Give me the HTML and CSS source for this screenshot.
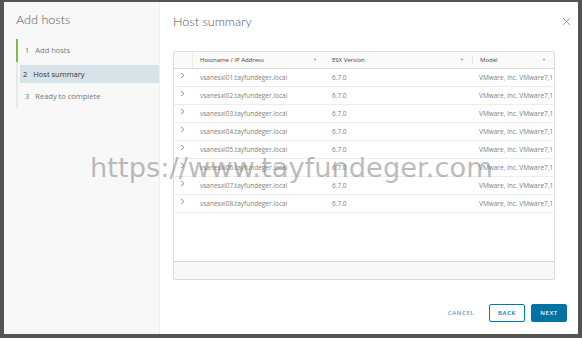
FILE: index.html
```html
<!DOCTYPE html>
<html>
<head>
<meta charset="utf-8">
<link rel="stylesheet" href="styles.css">
</head>
<body>
<div class="dialog">
  <aside class="side">
    <h1 class="side-title">Add hosts</h1>
    <ol class="steps">
      <li class="step done"><span class="num">1</span>Add hosts</li>
      <li class="step active"><span class="num">2</span>Host summary</li>
      <li class="step"><span class="num">3</span>Ready to complete</li>
    </ol>
  </aside>
  <main class="main">
    <div class="head">
      <h2 class="title">Host summary</h2>
      <svg class="close" width="9" height="9" viewBox="0 0 9 9"><path d="M1 1L8 8M8 1L1 8" stroke="#999" stroke-width="1"/></svg>
    </div>
    <div class="grid">
      <div class="row hdr">
        <div class="c exp"></div>
        <div class="c host">Hostname / IP Address<span class="flt">&#9660;</span></div>
        <div class="c ver">ESX Version<span class="flt">&#9660;</span></div>
        <div class="c model">Model<span class="flt">&#9660;</span></div>
      </div>
      <div class="body">
        <div class="row"><div class="c exp"><svg class="chev" width="5" height="7" viewBox="0 0 5 7"><path d="M1 1L4 3.5L1 6" fill="none" stroke="#888" stroke-width="0.9"/></svg></div><div class="c host">vsanesxi01.tayfundeger.local</div><div class="c ver">6.7.0</div><div class="c model">VMware, Inc. VMware7,1</div></div>
        <div class="row"><div class="c exp"><svg class="chev" width="5" height="7" viewBox="0 0 5 7"><path d="M1 1L4 3.5L1 6" fill="none" stroke="#888" stroke-width="0.9"/></svg></div><div class="c host">vsanesxi02.tayfundeger.local</div><div class="c ver">6.7.0</div><div class="c model">VMware, Inc. VMware7,1</div></div>
        <div class="row"><div class="c exp"><svg class="chev" width="5" height="7" viewBox="0 0 5 7"><path d="M1 1L4 3.5L1 6" fill="none" stroke="#888" stroke-width="0.9"/></svg></div><div class="c host">vsanesxi03.tayfundeger.local</div><div class="c ver">6.7.0</div><div class="c model">VMware, Inc. VMware7,1</div></div>
        <div class="row"><div class="c exp"><svg class="chev" width="5" height="7" viewBox="0 0 5 7"><path d="M1 1L4 3.5L1 6" fill="none" stroke="#888" stroke-width="0.9"/></svg></div><div class="c host">vsanesxi04.tayfundeger.local</div><div class="c ver">6.7.0</div><div class="c model">VMware, Inc. VMware7,1</div></div>
        <div class="row"><div class="c exp"><svg class="chev" width="5" height="7" viewBox="0 0 5 7"><path d="M1 1L4 3.5L1 6" fill="none" stroke="#888" stroke-width="0.9"/></svg></div><div class="c host">vsanesxi05.tayfundeger.local</div><div class="c ver">6.7.0</div><div class="c model">VMware, Inc. VMware7,1</div></div>
        <div class="row"><div class="c exp"><svg class="chev" width="5" height="7" viewBox="0 0 5 7"><path d="M1 1L4 3.5L1 6" fill="none" stroke="#888" stroke-width="0.9"/></svg></div><div class="c host">vsanesxi06.tayfundeger.local</div><div class="c ver">6.7.0</div><div class="c model">VMware, Inc. VMware7,1</div></div>
        <div class="row"><div class="c exp"><svg class="chev" width="5" height="7" viewBox="0 0 5 7"><path d="M1 1L4 3.5L1 6" fill="none" stroke="#888" stroke-width="0.9"/></svg></div><div class="c host">vsanesxi07.tayfundeger.local</div><div class="c ver">6.7.0</div><div class="c model">VMware, Inc. VMware7,1</div></div>
        <div class="row"><div class="c exp"><svg class="chev" width="5" height="7" viewBox="0 0 5 7"><path d="M1 1L4 3.5L1 6" fill="none" stroke="#888" stroke-width="0.9"/></svg></div><div class="c host">vsanesxi08.tayfundeger.local</div><div class="c ver">6.7.0</div><div class="c model">VMware, Inc. VMware7,1</div></div>
      </div>
      <div class="foot"></div>
    </div>
    <div class="actions">
      <button class="btn link">CANCEL</button>
      <button class="btn outline">BACK</button>
      <button class="btn primary">NEXT</button>
    </div>
  </main>
  <div class="watermark">https://www.tayfundeger.com</div>
</div>
</body>
</html>
```
FILE: styles.css
```css
html, body { margin: 0; padding: 0; }
body {
  width: 582px; height: 338px;
  background: #545454;
  box-sizing: border-box;
  padding: 2px 4px 4px 4px;
  font-family: "Open Sans", "Liberation Sans", sans-serif;
  overflow: hidden;
}
.dialog {
  position: relative;
  display: flex;
  height: 332px;
  background: #fff;
}
.side {
  width: 156px;
  background: #f8f8f8;
  border-right: 1px solid #eeeeee;
  box-sizing: border-box;
  padding: 9px 0 0 12px;
}
.side-title {
  margin: 0;
  font-family: Lato, "Open Sans", sans-serif;
  font-weight: 300;
  font-size: 12.6px;
  color: #565656;
  line-height: 18px;
}
.steps {
  list-style: none;
  margin: 10px 0 0 0;
  padding: 0;
  border-left: 2px solid #e8e8e8;
}
.step {
  height: 23px;
  line-height: 23px;
  font-size: 7.5px;
  color: #777;
  padding-left: 7px;
  margin-left: -2px;
  border-left: 2px solid transparent;
}
.step .num { margin-right: 6px; }
.step.done { border-left-color: #7fbd42; }
.step.active { background: #d8e3e9; color: #333; margin-left: 2px; padding-left: 3px; border-left: none; height: 18px; line-height: 18px; margin-top: 3px; margin-bottom: 2px; }
.main {
  flex: 1;
  display: flex;
  flex-direction: column;
  padding: 0 23px 0 13px;
  box-sizing: border-box;
}
.head {
  display: flex;
  justify-content: space-between;
  align-items: center;
  height: 38px;
}
.title {
  margin: 0;
  font-family: Lato, "Open Sans", sans-serif;
  font-weight: 300;
  font-size: 12.6px;
  color: #565656;
}
.close { margin-right: -16px; }
.grid {
  margin-top: 11px;
  border: 1px solid #dcdcdc;
  border-radius: 2px;
  display: flex;
  flex-direction: column;
  height: 229px;
  box-sizing: border-box;
}
.row {
  display: flex;
  height: 18px;
  box-sizing: border-box;
  border-bottom: 1px solid #ececec;
  align-items: center;
  font-size: 6.5px;
  color: #808080;
}
.row.hdr {
  height: 17px;
  background: #fafafa;
  border-bottom: 1px solid #d8d8d8;
  color: #444;
  font-size: 6px;
}
.c { box-sizing: border-box; padding-left: 7px; white-space: nowrap; position: relative; }
.exp { width: 19px; padding-left: 6px; display: flex; align-items: center; margin-top: -4px; }
.hdr .exp { height: 100%; border-right: 1px solid #ececec; margin-top: 0; }
.host { width: 132px; }
.ver { width: 147px; }
.model { flex: 1; }
.hdr .model { border-left: 1px solid #e4e4e4; }
.flt { position: absolute; right: 8px; font-size: 4px; color: #999; top: 1px; }
.body { flex: 1; }
.foot {
  height: 17px;
  background: #f8f8f8;
  border-top: 1px solid #d8d8d8;
}
.actions {
  display: flex;
  justify-content: flex-end;
  align-items: center;
  gap: 6px;
  margin-top: 24px;
  margin-right: -12px;
}
.btn {
  font-family: "Open Sans", "Liberation Sans", sans-serif;
  font-size: 6px;
  font-weight: 600;
  letter-spacing: 0.6px;
  height: 18px;
  width: 36px;
  box-sizing: border-box;
  border-radius: 2px;
  padding: 0;
  cursor: pointer;
}
.btn.link { background: none; border: none; color: #5aa0c8; width: 40px; margin-right: 2px; }
.btn.outline { background: #fff; border: 1px solid #0079b8; color: #0079b8; }
.btn.primary { background: #0072a3; border: 1px solid #0072a3; color: #fff; }
.watermark {
  position: absolute;
  left: 86px;
  top: 150px;
  font-family: "DejaVu Sans", sans-serif;
  font-size: 27.3px;
  color: rgba(120,120,120,0.5);
  white-space: nowrap;
  pointer-events: none;
}
```
